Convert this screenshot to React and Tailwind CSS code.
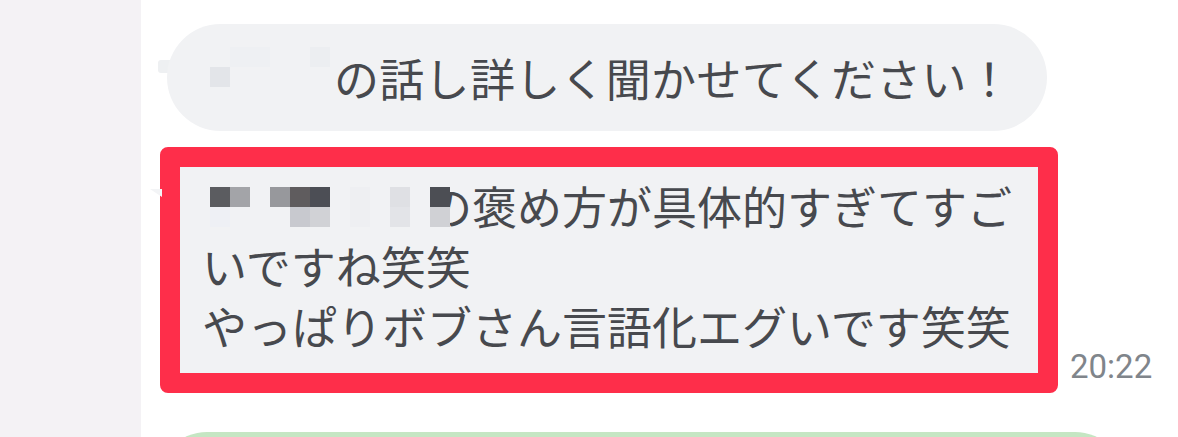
const jp = { fontFamily: '"Noto Sans CJK JP", "Noto Sans", sans-serif' };

// pixelated name blocks in the red-boxed bubble (relative to inner gray area)
const mosaicRed = [
  { l: 30, t: 20, c: 'bg-[#5b5c60]' },
  { l: 50, t: 20, c: 'bg-[#a3a4a8]' },
  { l: 90, t: 20, c: 'bg-[#97989c]' },
  { l: 110, t: 20, c: 'bg-[#5f5c5e]' },
  { l: 130, t: 20, c: 'bg-[#4c4e55]' },
  { l: 170, t: 20, c: 'bg-[#eeeff2]' },
  { l: 210, t: 20, c: 'bg-[#dfe0e4]' },
  { l: 250, t: 20, c: 'bg-[#4c4e54]' },
  { l: 30, t: 40, c: 'bg-[#eef0f5]' },
  { l: 110, t: 40, c: 'bg-[#c8c9cf]' },
  { l: 130, t: 40, c: 'bg-[#d1d2d6]' },
  { l: 170, t: 40, c: 'bg-[#eeeff2]' },
  { l: 210, t: 40, c: 'bg-[#e3e4e8]' },
  { l: 250, t: 40, c: 'bg-[#d0d1d5]' },
];

const mosaicTop = [
  { l: 43, t: 43, c: 'bg-[#e3e5e9]' },
  { l: 63, t: 23, c: 'bg-[#eef0f3]' },
  { l: 83, t: 23, c: 'bg-[#eef0f3]' },
  { l: 143, t: 23, c: 'bg-[#eceef1]' },
];

function Blocks({ items }) {
  return items.map((b, i) => (
    <span
      key={i}
      className={`absolute h-[20px] w-[20px] ${b.c}`}
      style={{ left: b.l, top: b.t }}
    />
  ));
}

export default function App() {
  return (
    <div className="flex h-[437px] w-[1178px] overflow-hidden bg-white" style={jp}>
      <div className="w-[141px] shrink-0 bg-[#f4f2f5]" />

      <div className="flex flex-1 flex-col pt-[24px]">
        {/* incoming bubble */}
        <div className="relative ml-[26px] w-[880px]">
          <span className="absolute left-[-9px] top-[36px] h-[13px] w-[16px] rounded-[3px] bg-[#eef0f2]" />
          <div className="relative flex h-[107px] items-center rounded-full bg-[#f1f2f4] pl-[40px] text-[45px] tracking-[0.3px] leading-[60px] text-[#47494e] whitespace-nowrap">
            <Blocks items={mosaicTop} />
            <span className="inline-block w-[127px]" />
            の話し詳しく聞かせてください！
          </div>
        </div>

        {/* highlighted bubble + time */}
        <div className="relative mt-[16px] ml-[19px] flex items-end gap-[12px]">
          <svg className="absolute left-[-10px] top-[42px]" width="12" height="10" viewBox="0 0 12 10">
            <path d="M0 0 L12 0 L12 8 Z" fill="#f3f4f6" />
          </svg>
          <div className="h-[246px] w-[898px] shrink-0 rounded-[8px] border-[20px] border-[#fe2e4a]">
            <div className="relative h-full bg-[#f1f2f4] pl-[22px] pt-[9px] text-[45px] leading-[60px] text-[#47494e] whitespace-nowrap">
              <Blocks items={mosaicRed} />
              <span className="inline-block w-[225px]" />
              の褒め方が具体的すぎてすご
              <br />
              いですね笑笑
              <br />
              やっぱりボブさん言語化エグいです笑笑
            </div>
          </div>
          <span
            className="mb-[10px] text-[33px] leading-none text-[#80858b]"
            style={{ fontFamily: 'Roboto, "Liberation Sans", sans-serif' }}
          >
            20:22
          </span>
        </div>

        {/* next outgoing bubble, cut off */}
        <div className="mt-[39px] ml-[16px] h-[100px] w-[968px] shrink-0 rounded-[50px] bg-[#c5e6c3]" />
      </div>
    </div>
  );
}
